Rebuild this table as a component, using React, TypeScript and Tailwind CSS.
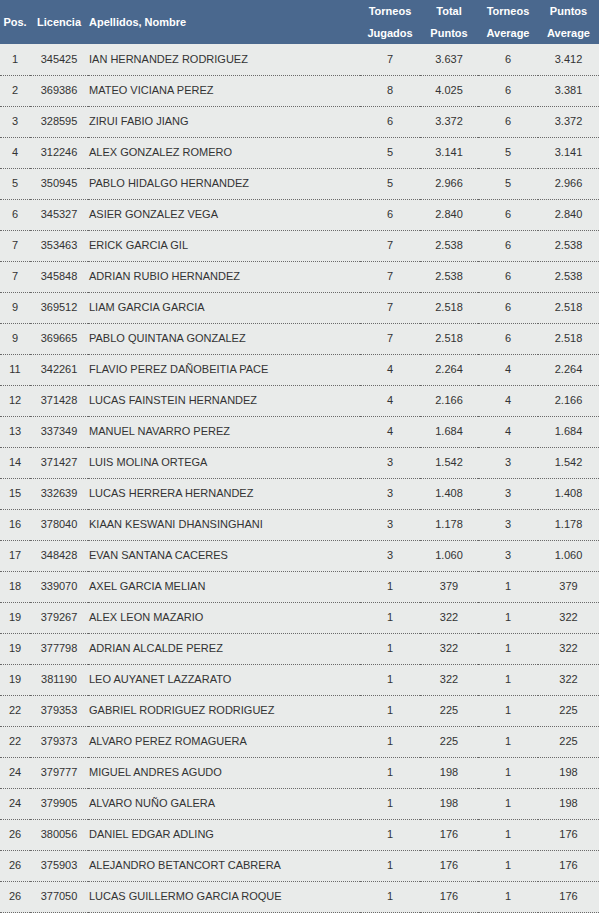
const filas: [string, string, string, string, string, string, string][] = [
  ["1", "345425", "IAN HERNANDEZ RODRIGUEZ", "7", "3.637", "6", "3.412"],
  ["2", "369386", "MATEO VICIANA PEREZ", "8", "4.025", "6", "3.381"],
  ["3", "328595", "ZIRUI FABIO JIANG", "6", "3.372", "6", "3.372"],
  ["4", "312246", "ALEX GONZALEZ ROMERO", "5", "3.141", "5", "3.141"],
  ["5", "350945", "PABLO HIDALGO HERNANDEZ", "5", "2.966", "5", "2.966"],
  ["6", "345327", "ASIER GONZALEZ VEGA", "6", "2.840", "6", "2.840"],
  ["7", "353463", "ERICK GARCIA GIL", "7", "2.538", "6", "2.538"],
  ["7", "345848", "ADRIAN RUBIO HERNANDEZ", "7", "2.538", "6", "2.538"],
  ["9", "369512", "LIAM GARCIA GARCIA", "7", "2.518", "6", "2.518"],
  ["9", "369665", "PABLO QUINTANA GONZALEZ", "7", "2.518", "6", "2.518"],
  ["11", "342261", "FLAVIO PEREZ DAÑOBEITIA PACE", "4", "2.264", "4", "2.264"],
  ["12", "371428", "LUCAS FAINSTEIN HERNANDEZ", "4", "2.166", "4", "2.166"],
  ["13", "337349", "MANUEL NAVARRO PEREZ", "4", "1.684", "4", "1.684"],
  ["14", "371427", "LUIS MOLINA ORTEGA", "3", "1.542", "3", "1.542"],
  ["15", "332639", "LUCAS HERRERA HERNANDEZ", "3", "1.408", "3", "1.408"],
  ["16", "378040", "KIAAN KESWANI DHANSINGHANI", "3", "1.178", "3", "1.178"],
  ["17", "348428", "EVAN SANTANA CACERES", "3", "1.060", "3", "1.060"],
  ["18", "339070", "AXEL GARCIA MELIAN", "1", "379", "1", "379"],
  ["19", "379267", "ALEX LEON MAZARIO", "1", "322", "1", "322"],
  ["19", "377798", "ADRIAN ALCALDE PEREZ", "1", "322", "1", "322"],
  ["19", "381190", "LEO AUYANET LAZZARATO", "1", "322", "1", "322"],
  ["22", "379353", "GABRIEL RODRIGUEZ RODRIGUEZ", "1", "225", "1", "225"],
  ["22", "379373", "ALVARO PEREZ ROMAGUERA", "1", "225", "1", "225"],
  ["24", "379777", "MIGUEL ANDRES AGUDO", "1", "198", "1", "198"],
  ["24", "379905", "ALVARO NUÑO GALERA", "1", "198", "1", "198"],
  ["26", "380056", "DANIEL EDGAR ADLING", "1", "176", "1", "176"],
  ["26", "375903", "ALEJANDRO BETANCORT CABRERA", "1", "176", "1", "176"],
  ["26", "377050", "LUCAS GUILLERMO GARCIA ROQUE", "1", "176", "1", "176"],
]

export default function App() {
  const celda = "h-[31px] p-0 border-b border-dotted border-[#6a6a6a] text-center"

  return (
    <div className="w-[600px] bg-white font-['Liberation_Sans',Arial,sans-serif]">
      <table className="w-[599px] border-collapse table-fixed bg-[#e9ebea] text-[11px] text-[#333]">
        <colgroup>
          <col className="w-[30px]" />
          <col className="w-[58px]" />
          <col className="w-[272px]" />
          <col className="w-[60px]" />
          <col className="w-[58px]" />
          <col className="w-[60px]" />
          <col className="w-[61px]" />
        </colgroup>
        <thead>
          <tr className="h-[44px] bg-[#4a688e] text-white text-[11px] font-bold leading-[22px]">
            <th className="p-0 text-center">Pos.</th>
            <th className="p-0 text-center">Licencia</th>
            <th className="p-0 pl-px text-left">Apellidos, Nombre</th>
            <th className="p-0 text-center">Torneos<br />Jugados</th>
            <th className="p-0 text-center">Total<br />Puntos</th>
            <th className="p-0 text-center">Torneos<br />Average</th>
            <th className="p-0 text-center">Puntos<br />Average</th>
          </tr>
        </thead>
        <tbody>
          {filas.map((f, i) => (
            <tr key={i}>
              <td className={celda}>{f[0]}</td>
              <td className={celda}>{f[1]}</td>
              <td className="h-[31px] p-0 pl-px border-b border-dotted border-[#6a6a6a] text-left">{f[2]}</td>
              <td className={celda}>{f[3]}</td>
              <td className={celda}>{f[4]}</td>
              <td className={celda}>{f[5]}</td>
              <td className={celda}>{f[6]}</td>
            </tr>
          ))}
        </tbody>
      </table>
    </div>
  )
}
